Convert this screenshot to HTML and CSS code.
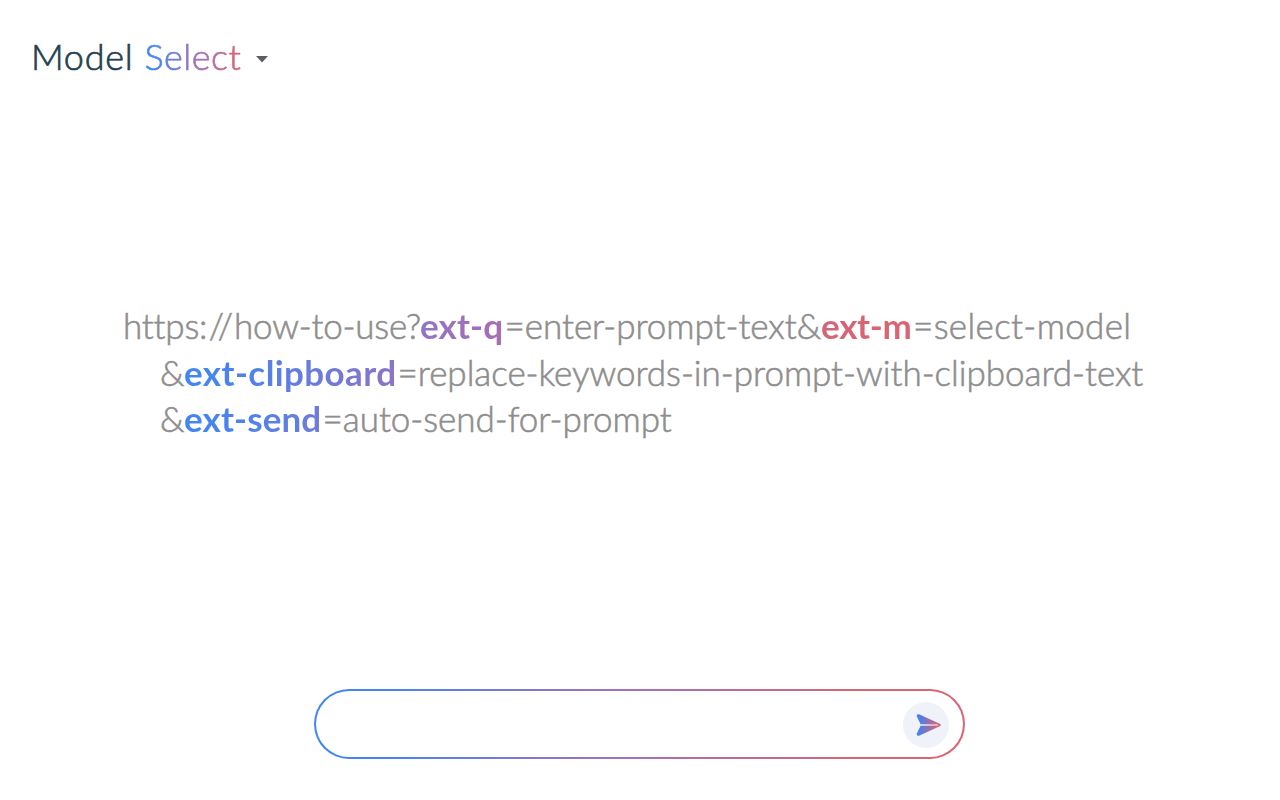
FILE: index.html
```
<!DOCTYPE html>
<html lang="en">
<head>
<meta charset="utf-8">
<title>Model Select</title>
<link rel="stylesheet" href="styles.css">
</head>
<body>
<header class="model">
  <span class="name">Model</span>
  <span class="select">Select</span>
  <svg class="caret" width="12" height="7" viewBox="0 0 12 7"><path d="M0 0h12L6 6.5z" fill="#5b5e62"/></svg>
</header>
<main class="usage">
  <div class="line"><span class="url">https<span class="slashes">://</span>how-to-use?</span><b class="key key-q">ext-q</b><span class="value value-q">=enter-prompt-text&amp;</span><b class="key key-m">ext-m</b><span class="value value-m">=select-model</span></div>
  <div class="line indent"><span class="amp">&amp;</span><b class="key key-clipboard">ext-clipboard</b><span class="value">=replace-keywords-in-prompt-with-clipboard-text</span></div>
  <div class="line indent"><span class="amp">&amp;</span><b class="key key-send">ext-send</b><span class="value">=auto-send-for-prompt</span></div>
</main>
<footer class="prompt">
  <button class="send" aria-label="Send">
    <svg width="25" height="22" viewBox="0 0 25 22">
      <defs><linearGradient id="plane" x1="0" x2="1" y1="0" y2="0"><stop offset="0" stop-color="#4285f4"/><stop offset=".15" stop-color="#4c7fe8"/><stop offset=".55" stop-color="#a26da5"/><stop offset="1" stop-color="#e06468"/></linearGradient></defs>
      <path d="M3 .3 23.8 9.8Q25.8 11 23.8 12.2L3 21.7Q.2 22.3.8 19.5L5 11 .8 2.5Q.2-.3 3 .3Z" fill="url(#plane)"/>
      <path d="M5 10.2 22 10.6v.8L5 11.8z" fill="#f8eef2"/>
    </svg>
  </button>
</footer>
</body>
</html>
```
FILE: styles.css
```
* {
  box-sizing: border-box;
}

body {
  margin: 0;
  height: 800px;
  display: flex;
  flex-direction: column;
  background: #fff;
  color: #8e8e8e;
  font-family: Lato, "Noto Sans", sans-serif;
  font-weight: 300;
  font-variant-ligatures: none;
  overflow: hidden;
}

.model {
  display: flex;
  align-items: center;
  height: 112px;
  padding-left: 31px;
  font-size: 36px;
  line-height: 44px;
}

.name {
  width: 113.5px;
  color: #253f50;
  letter-spacing: .75px;
  -webkit-text-stroke: .7px #253f50;
}

.select {
  width: 111.5px;
  letter-spacing: .5px;
  -webkit-text-stroke: .7px transparent;
  color: transparent;
  background: linear-gradient(90deg, #4285f4 0, #4285f4 8%, #a96fb8 50%, #d96570 86%);
  -webkit-background-clip: text;
  background-clip: text;
}

.caret {
  margin-top: 6px;
}

.usage {
  height: 577px;
  padding: 190px 0 0 123px;
  font-size: 35px;
  line-height: 46.5px;
  -webkit-text-stroke: .6px #8e8e8e;
}

.line {
  display: flex;
  white-space: nowrap;
}

.indent {
  padding-left: 37px;
}

.url {
  width: 297px;
  letter-spacing: -.22px;
}

.slashes {
  letter-spacing: 1.2px;
}

.amp {
  width: 24px;
}

.value {
  text-indent: 1px;
  letter-spacing: -.03px;
}

.key {
  font-weight: 700;
  color: transparent;
  -webkit-text-stroke: 0;
  -webkit-background-clip: text;
  background-clip: text;
}

.key-q {
  width: 83.5px;
  letter-spacing: .1px;
  background-image: linear-gradient(90deg, #9175c5, #a96cb2);
}

.value-q {
  width: 317.5px;
}

.key-m {
  width: 91px;
  letter-spacing: -.3px;
  background-image: linear-gradient(90deg, #d46578, #d96570);
}

.value-m {
  letter-spacing: .35px;
}

.key-clipboard {
  width: 212.5px;
  letter-spacing: .4px;
  background-image: linear-gradient(90deg, #4285f4, #4d82ee 28%, #8b74c8);
}

.key-send {
  width: 137.5px;
  letter-spacing: .1px;
  background-image: linear-gradient(90deg, #4285f4, #4d82ee 43%, #6f7bd9);
}

.prompt {
  display: flex;
  align-items: center;
  justify-content: flex-end;
  width: 651px;
  height: 70px;
  margin-left: 314px;
  padding-right: 14px;
  border: 2px solid transparent;
  border-radius: 35px;
  background:
    linear-gradient(#fff, #fff) padding-box,
    linear-gradient(90deg, #4285f4, #4a83f0 12%, #a96fb8 50%, #d96570 85%) border-box;
}

.send {
  display: flex;
  align-items: center;
  justify-content: center;
  width: 46px;
  height: 46px;
  margin-top: 2px;
  padding: 0 0 0 5px;
  border: 0;
  border-radius: 50%;
  background: #eff3f9;
}
```
